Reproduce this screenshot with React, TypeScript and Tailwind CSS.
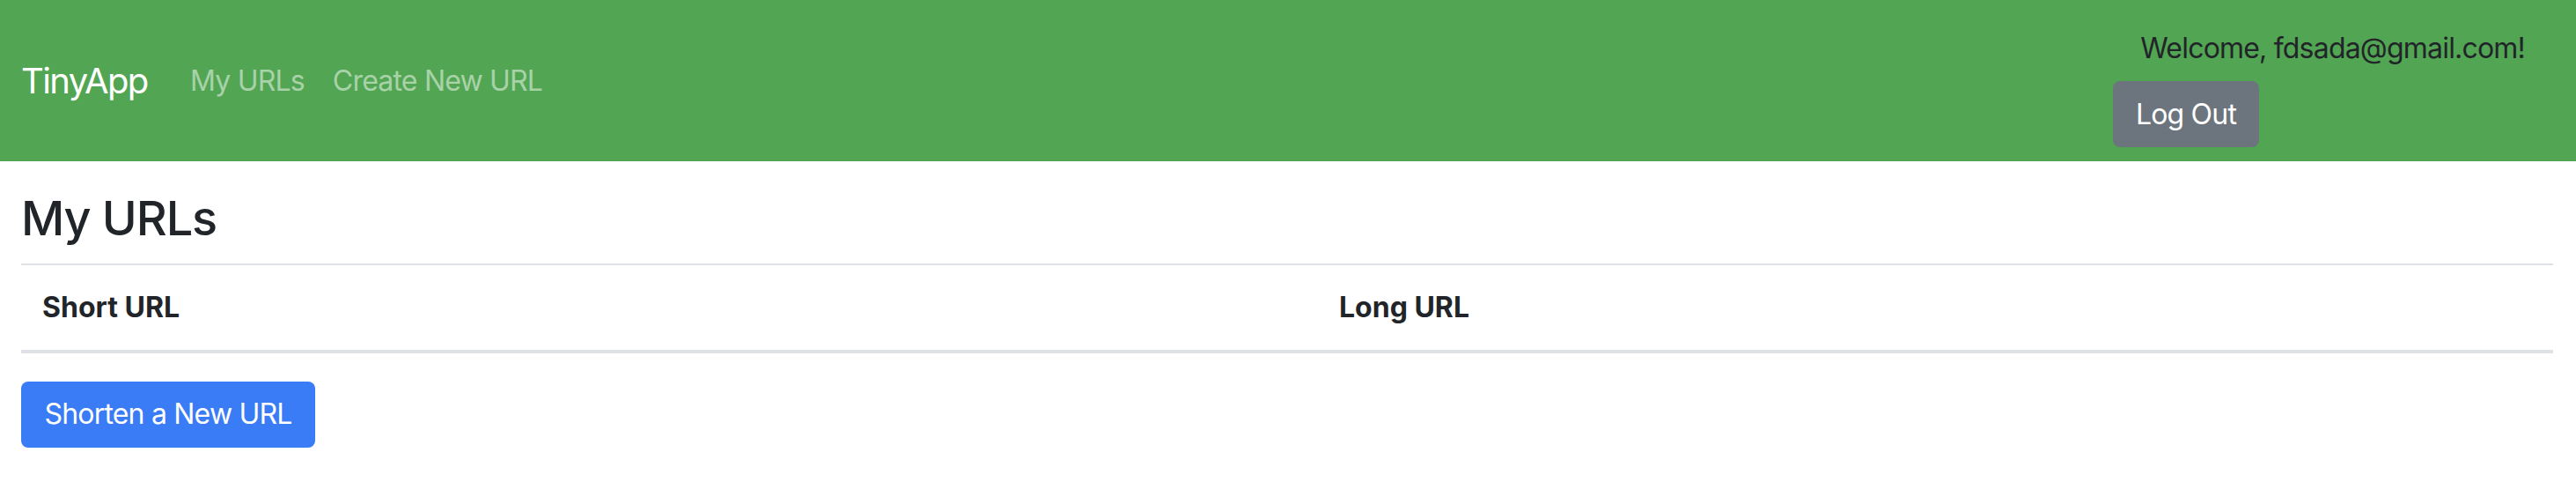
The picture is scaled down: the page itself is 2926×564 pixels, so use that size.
export default function App() {
  return (
    <div className="min-h-screen bg-white font-[Inter,sans-serif] text-[#212529]">
      {/* top bar */}
      <nav className="flex h-[183px] items-center justify-between bg-[#52a552] pl-[24px] pr-[58px]">
        <div className="flex items-center">
          <a className="mr-[32px] w-[144px] text-[40px] leading-[60px] tracking-[-0.04em] text-white">TinyApp</a>
          <a className="px-[16px] text-[32px] leading-[48px] tracking-[-0.025em] text-white/50">My URLs</a>
          <a className="px-[16px] text-[32px] leading-[48px] tracking-[-0.025em] text-white/50">Create New URL</a>
        </div>
        <div className="flex w-[468px] flex-col items-start self-start pt-[31px]">
          <span className="w-full text-right text-[32px] leading-[48px] tracking-[-0.025em] text-[#212529]">
            Welcome, fdsada@gmail.com!
          </span>
          <button className="mt-[13px] h-[75px] w-[166px] rounded-[8px] bg-[#6c757d] text-[32px] leading-[48px] tracking-[-0.025em] text-white">
            Log Out
          </button>
        </div>
      </nav>

      <main className="pl-[24px] pr-[26px]">
        <h4 className="mt-[33px] mb-[18px] text-[54px] leading-[1.2] font-medium tracking-[-0.02em]">My URLs</h4>

        <div className="grid grid-cols-[1473px_1fr] border-t-2 border-b-4 border-[#dee2e6]">
          <div className="p-[24px] text-[32px] leading-[48px] font-bold">Short URL</div>
          <div className="p-[24px] text-[32px] leading-[48px] font-bold">Long URL</div>
        </div>

        <button className="mt-[32px] h-[75px] w-[334px] rounded-[8px] bg-[#3a7bf6] text-[32px] leading-[48px] tracking-[-0.025em] text-white">
          Shorten a New URL
        </button>
      </main>
    </div>
  );
}
